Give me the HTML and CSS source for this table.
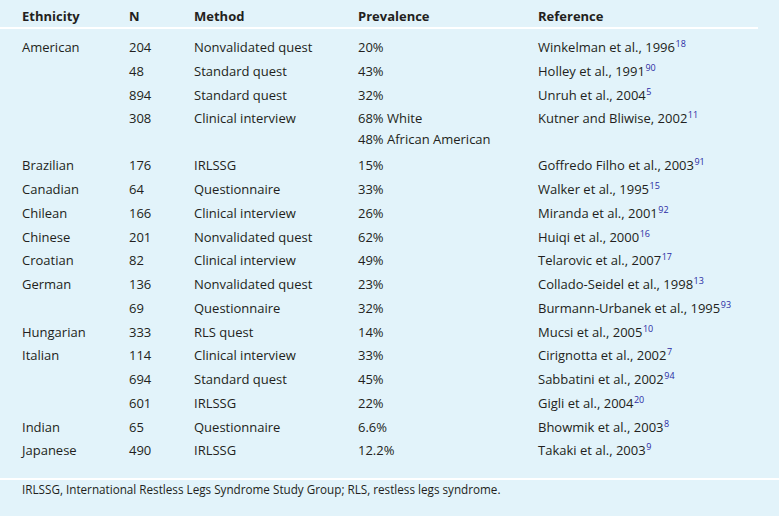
FILE: index.html
```html
<!DOCTYPE html>
<html>
<head>
<meta charset="utf-8">
<link rel="stylesheet" href="styles.css">
</head>
<body>
<div class="panel">
<table class="data">
<colgroup>
<col class="c1"><col class="c2"><col class="c3"><col class="c4"><col class="c5">
</colgroup>
<thead>
<tr><th>Ethnicity</th><th>N</th><th>Method</th><th>Prevalence</th><th>Reference</th></tr>
</thead>
<tbody>
<tr class="first"><td>American</td><td>204</td><td>Nonvalidated quest</td><td>20%</td><td>Winkelman et al., 1996<sup>18</sup></td></tr>
<tr><td></td><td>48</td><td>Standard quest</td><td>43%</td><td>Holley et al., 1991<sup>90</sup></td></tr>
<tr><td></td><td>894</td><td>Standard quest</td><td>32%</td><td>Unruh et al., 2004<sup>5</sup></td></tr>
<tr><td></td><td>308</td><td>Clinical interview</td><td><div class="ln">68% White</div><div class="ln extra">48% African American</div></td><td>Kutner and Bliwise, 2002<sup>11</sup></td></tr>
<tr><td>Brazilian</td><td>176</td><td>IRLSSG</td><td>15%</td><td>Goffredo Filho et al., 2003<sup>91</sup></td></tr>
<tr><td>Canadian</td><td>64</td><td>Questionnaire</td><td>33%</td><td>Walker et al., 1995<sup>15</sup></td></tr>
<tr><td>Chilean</td><td>166</td><td>Clinical interview</td><td>26%</td><td>Miranda et al., 2001<sup>92</sup></td></tr>
<tr><td>Chinese</td><td>201</td><td>Nonvalidated quest</td><td>62%</td><td>Huiqi et al., 2000<sup>16</sup></td></tr>
<tr><td>Croatian</td><td>82</td><td>Clinical interview</td><td>49%</td><td>Telarovic et al., 2007<sup>17</sup></td></tr>
<tr><td>German</td><td>136</td><td>Nonvalidated quest</td><td>23%</td><td>Collado-Seidel et al., 1998<sup>13</sup></td></tr>
<tr><td></td><td>69</td><td>Questionnaire</td><td>32%</td><td>Burmann-Urbanek et al., 1995<sup>93</sup></td></tr>
<tr><td>Hungarian</td><td>333</td><td>RLS quest</td><td>14%</td><td>Mucsi et al., 2005<sup>10</sup></td></tr>
<tr><td>Italian</td><td>114</td><td>Clinical interview</td><td>33%</td><td>Cirignotta et al., 2002<sup>7</sup></td></tr>
<tr><td></td><td>694</td><td>Standard quest</td><td>45%</td><td>Sabbatini et al., 2002<sup>94</sup></td></tr>
<tr><td></td><td>601</td><td>IRLSSG</td><td>22%</td><td>Gigli et al., 2004<sup>20</sup></td></tr>
<tr><td>Indian</td><td>65</td><td>Questionnaire</td><td>6.6%</td><td>Bhowmik et al., 2003<sup>8</sup></td></tr>
<tr class="last"><td>Japanese</td><td>490</td><td>IRLSSG</td><td>12.2%</td><td>Takaki et al., 2003<sup>9</sup></td></tr>
</tbody>
</table>
<div class="foot">IRLSSG, International Restless Legs Syndrome Study Group; RLS, restless legs syndrome.</div>
</div>
</body>
</html>
```

FILE: styles.css
```css
html, body {
  margin: 0;
  padding: 0;
  background: #e2f3fa;
}
body {
  width: 779px;
  height: 516px;
  overflow: hidden;
  font-family: "Open Sans", "DejaVu Sans", sans-serif;
  color: #231f20;
}
.panel {
  width: 779px;
}
.data {
  width: 758px;
  border-collapse: collapse;
  table-layout: fixed;
  font-size: 13px;
}
.c1 { width: 129px; }
.c2 { width: 65px; }
.c3 { width: 164px; }
.c4 { width: 180px; }
.c5 { width: 220px; }
.data th {
  text-align: left;
  font-weight: bold;
  line-height: 21px;
  padding: 6px 0 0 0;
  border-bottom: 2px solid #ffffff;
}
.data td {
  line-height: 21.75px;
  padding: 1px 0;
  vertical-align: top;
  white-space: nowrap;
}
.data td .ln {
  line-height: 21px;
}
.data td .ln.extra {
  margin-bottom: 3px;
}
.data th:first-child, .data td:first-child {
  padding-left: 22px;
}
.data tr.first td { padding-top: 8px; }
.data tr.last td { padding-bottom: 16px; }
.data sup {
  font-size: 9px;
  line-height: 0;
  color: #2b2ba3;
  vertical-align: 5px;
  margin-left: 0.5px;
}
.foot {
  width: 779px;
  border-top: 2px solid #ffffff;
  font-size: 11.7px;
  line-height: 16px;
  padding: 1px 0 0 22px;
  box-sizing: border-box;
}
```
